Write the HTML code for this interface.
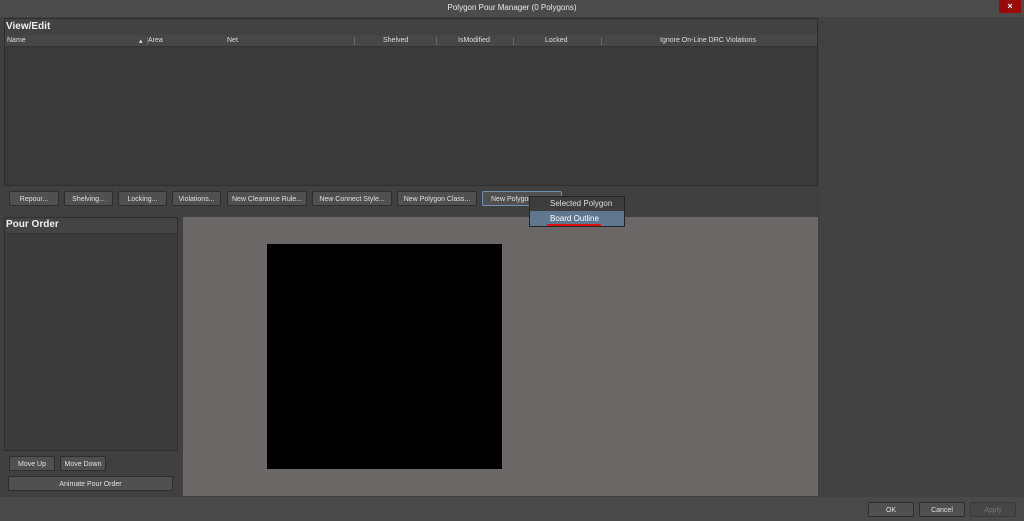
<!DOCTYPE html><html><head><style>
body{margin:0;width:1024px;height:521px;background:#494949;position:relative;overflow:hidden;font-family:"Liberation Sans",sans-serif;color:#ddd}
.a{position:absolute}
.btn{position:absolute;height:15px;top:191px;background:#505050;border:1px solid #2e2e2e;border-radius:2px;font-size:7px;line-height:15px;text-align:center;color:#e0e0e0;box-sizing:border-box}
.col{position:absolute;top:37px;font-size:7px;color:#ddd}
.sep{position:absolute;top:37px;width:1px;height:8px;background:#666}
</style></head><body>
<div class="a" style="left:0;top:0;width:1024px;height:17px;background:#4b4b4b"></div>
<div class="a" style="left:0;top:3px;width:1024px;text-align:center;font-size:8px;color:#e8e8e8">Polygon Pour Manager (0 Polygons)</div>
<div class="a" style="left:999px;top:0;width:22px;height:13px;background:#9a0a0a;color:#fff;font-size:9px;text-align:center;line-height:13px;font-weight:bold">×</div>
<div class="a" style="left:0;top:17px;width:820px;height:480px;background:#404040"></div>
<div class="a" style="left:820px;top:17px;width:204px;height:480px;background:#424242"></div>
<div class="a" style="left:4px;top:18px;width:814px;height:168px;background:#3a3a3a;border:1px solid #2e2e2e;box-sizing:border-box"></div>
<div class="a" style="left:5px;top:19px;width:812px;height:16px;background:#424242;border-bottom:1px solid #333"></div>
<div class="a" style="left:6px;top:21px;font-size:10px;font-weight:bold;color:#eee">View/Edit</div>
<div class="a" style="left:5px;top:35px;width:812px;height:11px;background:#474747;border-bottom:1px solid #333"></div>
<div class="col" style="left:7px">Name</div><div class="col" style="left:139px">▴</div>
<div class="col" style="left:148px">Area</div><div class="col" style="left:227px">Net</div>
<div class="col" style="left:383px">Shelved</div><div class="col" style="left:458px">IsModified</div>
<div class="col" style="left:545px">Locked</div><div class="col" style="left:660px">Ignore On-Line DRC Violations</div>
<div class="sep" style="left:147px"></div><div class="sep" style="left:354px"></div><div class="sep" style="left:436px"></div><div class="sep" style="left:513px"></div><div class="sep" style="left:601px"></div>
<div class="btn" style="left:9px;width:50px">Repour...</div>
<div class="btn" style="left:64px;width:49px">Shelving...</div>
<div class="btn" style="left:118px;width:49px">Locking...</div>
<div class="btn" style="left:172px;width:49px">Violations...</div>
<div class="btn" style="left:227px;width:80px">New Clearance Rule...</div>
<div class="btn" style="left:312px;width:80px">New Connect Style...</div>
<div class="btn" style="left:397px;width:80px">New Polygon Class...</div>
<div class="btn" style="left:482px;width:80px;border-color:#6f8fb0;text-align:left;padding-left:8px">New Polygon</div>
<div class="a" style="left:4px;top:217px;width:174px;height:234px;background:#3b3b3b;border:1px solid #2e2e2e;box-sizing:border-box"></div>
<div class="a" style="left:5px;top:218px;width:172px;height:15px;background:#444;border-bottom:1px solid #333"></div>
<div class="a" style="left:6px;top:219px;font-size:10px;font-weight:bold;color:#eee">Pour Order</div>
<div class="btn" style="left:9px;top:456px;width:46px">Move Up</div>
<div class="btn" style="left:60px;top:456px;width:46px">Move Down</div>
<div class="btn" style="left:8px;top:476px;width:165px">Animate Pour Order</div>
<div class="a" style="left:183px;top:217px;width:635px;height:279px;background:#6b6766"></div>
<div class="a" style="left:267px;top:244px;width:235px;height:225px;background:#000"></div>
<div class="a" style="left:529px;top:196px;width:96px;height:31px;background:#3d3d3d;border:1px solid #252525;box-sizing:border-box"></div>
<div class="a" style="left:550px;top:199px;font-size:8px;color:#ddd">Selected Polygon</div>
<div class="a" style="left:530px;top:211px;width:94px;height:15px;background:#60788f"></div>
<div class="a" style="left:550px;top:214px;font-size:8px;color:#fff">Board Outline</div>
<div class="a" style="left:547px;top:224px;width:54px;height:2px;background:#e01010;border-radius:1px"></div>
<div class="btn" style="left:868px;top:502px;width:46px">OK</div>
<div class="btn" style="left:919px;top:502px;width:46px">Cancel</div>
<div class="btn" style="left:970px;top:502px;width:46px;background:#464646;color:#777;border-color:#3a3a3a">Apply</div>
</body></html>
